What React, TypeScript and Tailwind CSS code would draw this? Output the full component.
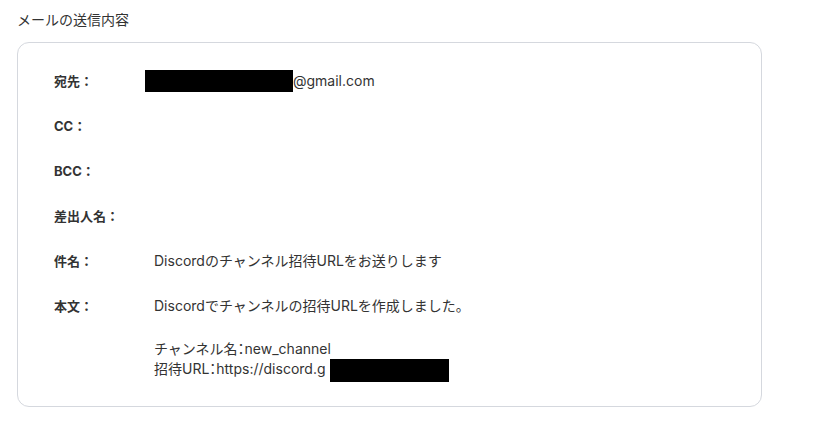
export default function App() {
  const colon = <span className="[font-feature-settings:'halt']">：</span>;

  const rows: { label: string; value?: React.ReactNode }[] = [
    {
      label: '宛先：',
      value: (
        <div className="relative pl-[139px]">
          {/* redacted address */}
          <span className="absolute left-[-9px] top-[-1px] h-[22px] w-[148px] bg-black" />
          @gmail.com
        </div>
      ),
    },
    { label: 'CC：' },
    { label: 'BCC：' },
    { label: '差出人名：' },
    { label: '件名：', value: 'Discordのチャンネル招待URLをお送りします' },
    {
      label: '本文：',
      value: (
        <div>
          <p>Discordでチャンネルの招待URLを作成しました。</p>
          <p className="mt-[23px]">チャンネル名{colon}new_channel</p>
          <p className="relative">
            招待URL{colon}https://discord.g
            <span className="absolute left-[176px] top-0 h-[23px] w-[119px] bg-black" />
          </p>
        </div>
      ),
    },
  ];

  return (
    <div
      className="min-h-[433px] w-[814px] bg-white leading-[20px] text-[#333333]"
      style={{ fontFamily: 'Inter, "Noto Sans CJK JP", sans-serif' }}
    >
      <div className="px-[17px] pt-[10px]">
        <h2 className="text-[14px] leading-[20px]">メールの送信内容</h2>
        <div className="mt-[12px] w-[745px] rounded-[12px] border border-[#d5d8de] pb-[27px] pl-[36px] pr-6 pt-[28px]">
          <div className="flex flex-col gap-[25px]">
            {rows.map((r) => (
              <div key={r.label} className="flex min-h-[20px]">
                <div className="w-[100px] shrink-0 text-[13px] font-bold">{r.label}</div>
                <div className="flex-1 text-[14px]">{r.value}</div>
              </div>
            ))}
          </div>
        </div>
      </div>
    </div>
  );
}
